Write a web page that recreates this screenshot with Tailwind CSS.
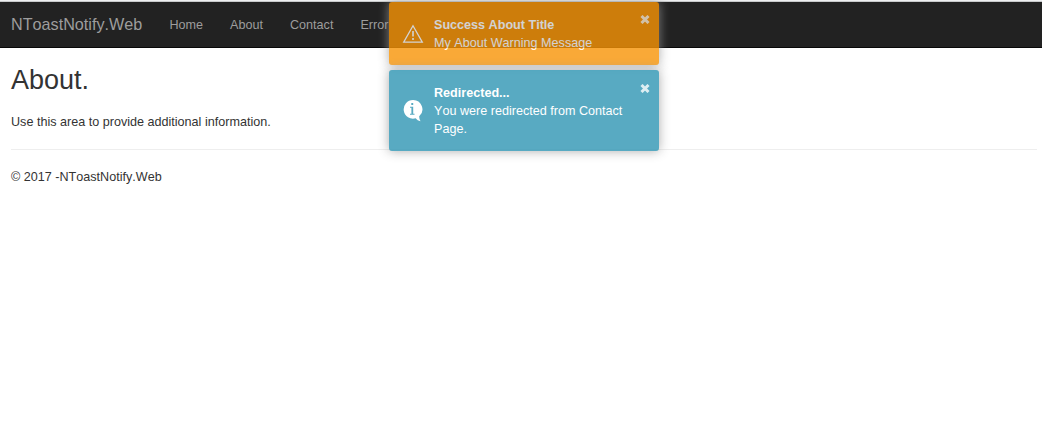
<!DOCTYPE html>
<html lang="en">
<head>
<meta charset="utf-8">
<title>About - NToastNotify.Web</title>
<script src="https://cdn.jsdelivr.net/npm/@tailwindcss/browser@4"></script>
</head>
<body class="relative min-h-screen overflow-hidden bg-white font-['Liberation_Sans',Arial,sans-serif] text-[12.6px] leading-[18px] text-[#333] [font-kerning:none]">
  <div class="h-px bg-[#eef0f1]"></div>
  <nav class="flex h-[47px] items-center border-b border-t border-b-[#080808] border-t-[#c8cacb] bg-[#222] pl-[11px] text-[#9d9d9d]">
    <a class="w-[158.5px] pb-[2px] text-[16.2px]">NToastNotify.Web</a>
    <div class="flex gap-[27px]">
      <a>Home</a><a>About</a><a>Contact</a><a>Error</a>
    </div>
  </nav>
  <main class="pl-[11px] pr-[5px]">
    <h2 class="pt-[17px] text-[27px] leading-[30px]">About.</h2>
    <p class="mt-[18px]">Use this area to provide additional information.</p>
    <hr class="mt-[18px] border-[#eee]">
    <footer class="mt-[18px]">© 2017 -NToastNotify.Web</footer>
  </main>
  <div class="absolute left-[389px] top-[2px] flex w-[270px] flex-col gap-[5px] text-white">
    <div class="relative flex h-[63px] rounded-[3px] bg-[#f89406] pl-[45px] pt-[14px] opacity-80 shadow-[0_0_11px_#999]">
      <svg class="absolute left-[13px] top-[22px]" width="22" height="20" viewBox="0 0 22 20" fill="none" stroke="#fff"><path d="M11 1.8 20.3 18.2H1.7Z" stroke-width="1.3"/><path d="M11 7v5.6M11 14v2" stroke-width="1.6"/></svg>
      <div><b class="block">Success About Title</b><p>My About Warning Message</p></div>
      <svg class="absolute right-[9px] top-[13px] opacity-80" width="10" height="9" viewBox="0 0 10 9" stroke="#fff" stroke-width="3"><path d="M1.500 1 8.500 8M8.500 1 1.500 8"/></svg>
    </div>
    <div class="relative flex h-[81px] rounded-[3px] bg-[#2f96b4] pl-[45px] pr-6 pt-[14px] opacity-80 shadow-[0_0_11px_#999]">
      <svg class="absolute left-[14px] top-[30px]" width="20" height="22" viewBox="0 0 20 22"><path fill="#fff" d="M10 0a9.3 9.3 0 0 1 6.2 16.3c-.1 1.800.4 3.400 1.300 4.900-2-.4-3.700-1.500-4.800-3A9.300 9.300 0 1 1 10 0Z"/><path fill="#2f96b4" d="M8.300 3h1.900v1.900H8.300ZM7 6.800H10.200v7H11.500v1H7v-1h1.400V7.700H7Z"/></svg>
      <div><b class="block">Redirected...</b><p>You were redirected from Contact Page.</p></div>
      <svg class="absolute right-[9px] top-[14px] opacity-80" width="10" height="9" viewBox="0 0 10 9" stroke="#fff" stroke-width="3"><path d="M1.500 1 8.500 8M8.500 1 1.500 8"/></svg>
    </div>
  </div>
</body>
</html>
